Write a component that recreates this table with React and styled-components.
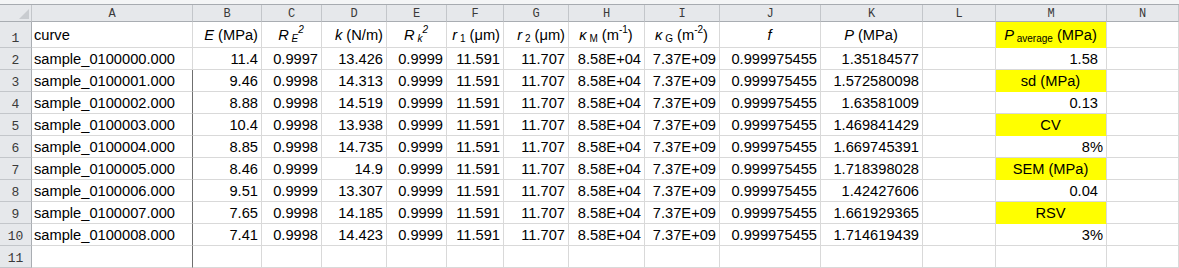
import React from "react";
import styled, { createGlobalStyle, css } from "styled-components";

const Global = createGlobalStyle`
  html, body { margin: 0; padding: 0; background: #ffffff; }
  body { font-family: "Liberation Sans", Arial, sans-serif; }
  * { box-sizing: border-box; }
`;

const COLS = [32, 161, 69, 60, 65, 60, 57, 65, 76, 75, 101, 102, 73, 111, 72];
const LETTERS = ["A", "B", "C", "D", "E", "F", "G", "H", "I", "J", "K", "L", "M", "N"];

const Sheet = styled.div`
  width: 1179px;
  height: 268px;
  overflow: hidden;
  background: #ffffff;
  display: flex;
  flex-direction: column;
`;

const TopStrip = styled.div`
  height: 5px;
  flex: none;
  background: #f4f5f6;
  border-bottom: 1px solid #a7abb0;
`;

const Grid = styled.div`
  display: grid;
  grid-template-columns: ${COLS.map((w) => `${w}px`).join(" ")};
  grid-template-rows: 17px 26px repeat(10, 22px);
`;

const HeadCell = styled.div`
  background: #e6e8eb;
  border-right: 1px solid #c3c6ca;
  border-bottom: 1px solid #a9adb2;
  display: flex;
  align-items: center;
  justify-content: center;
  font-family: "Liberation Mono", "DejaVu Sans Mono", monospace;
  font-size: 12px;
  color: #3a3a3a;
  padding-top: 1px;
`;

const Corner = styled(HeadCell)`
  align-items: flex-end;
  justify-content: flex-end;
  padding: 0 2px 2px 0;
`;

const RowHead = styled.div`
  background: #e6e8eb;
  border-right: 1px solid #a9adb2;
  border-bottom: 1px solid #c3c6ca;
  display: flex;
  align-items: flex-end;
  justify-content: center;
  padding-bottom: 1px;
  font-family: "Liberation Mono", "DejaVu Sans Mono", monospace;
  font-size: 13px;
  color: #3a3a3a;
`;

const Cell = styled.div`
  border-right: 1px solid ${(p) => (p.$split ? "#6f6f6f" : "#d9d9d9")};
  border-bottom: 1px solid #d9d9d9;
  display: flex;
  align-items: flex-end;
  padding: 0 ${(p) => p.$pr ?? 3}px 1px 2px;
  font-size: 14.67px;
  line-height: 18px;
  color: #000000;
  white-space: nowrap;
  justify-content: ${(p) =>
    p.$align === "right" ? "flex-end" : p.$align === "center" ? "center" : "flex-start"};
  ${(p) =>
    p.$fill &&
    css`
      background: #ffff00;
      border-bottom-color: #ffff00;
    `}
  ${(p) =>
    p.$title &&
    css`
      padding-bottom: 3px;
    `}
`;

const Content = styled.span`
  display: block;
  white-space: pre;
`;

const I = styled.i`
  font-style: italic;
`;

const Sub = styled.sub`
  font-size: 10px;
  vertical-align: -2px;
  line-height: 0;
  font-style: ${(p) => (p.$it ? "italic" : "normal")};
`;

const Sup = styled.sup`
  font-size: 10px;
  vertical-align: 7px;
  line-height: 0;
  font-style: ${(p) => (p.$it ? "italic" : "normal")};
`;

const header = [
  { a: "left", c: "curve" },
  { a: "right", c: <><I>E</I> (MPa)</> },
  { a: "center", c: <><I>R</I><Sub $it> E</Sub><Sup $it>2</Sup></> },
  { a: "right", c: <><I>k</I> (N/m)</> },
  { a: "center", c: <><I>R</I><Sub $it> k</Sub><Sup $it>2</Sup></> },
  { a: "right", c: <><I>r</I><Sub> 1</Sub> (μm)</> },
  { a: "right", c: <><I>r</I><Sub> 2</Sub> (μm)</> },
  { a: "center", c: <><I>κ</I><Sub> M</Sub> (m<Sup>-1</Sup>)</> },
  { a: "center", c: <><I>κ</I><Sub> G</Sub> (m<Sup>-2</Sup>)</> },
  { a: "center", c: <I>f</I> },
  { a: "center", c: <><I>P</I> (MPa)</> },
  { a: "left", c: "" },
  { a: "center", c: <><I>P</I><Sub> average</Sub> (MPa)</>, fill: true },
  { a: "left", c: "" },
];

const B = ["11.4", "9.46", "8.88", "10.4", "8.85", "8.46", "9.51", "7.65", "7.41"];
const C = ["0.9997", "0.9998", "0.9998", "0.9998", "0.9998", "0.9999", "0.9999", "0.9998", "0.9998"];
const D = ["13.426", "14.313", "14.519", "13.938", "14.735", "14.9", "13.307", "14.185", "14.423"];
const K = [
  "1.35184577",
  "1.572580098",
  "1.63581009",
  "1.469841429",
  "1.669745391",
  "1.718398028",
  "1.42427606",
  "1.661929365",
  "1.714619439",
];
const M = [
  { t: "1.58", pr: 8 },
  { t: "sd (MPa)", fill: true },
  { t: "0.13", pr: 8 },
  { t: "CV", fill: true },
  { t: "8%", pr: 3 },
  { t: "SEM (MPa)", fill: true },
  { t: "0.04", pr: 8 },
  { t: "RSV", fill: true },
  { t: "3%", pr: 3 },
];

function dataRow(i) {
  const m = M[i];
  return [
    { a: "left", c: `sample_010000${i}.000` },
    { a: "right", c: B[i] },
    { a: "right", c: C[i] },
    { a: "right", c: D[i] },
    { a: "right", c: "0.9999" },
    { a: "right", c: "11.591" },
    { a: "right", c: "11.707" },
    { a: "right", c: "8.58E+04" },
    { a: "right", c: "7.37E+09" },
    { a: "right", c: "0.999975455" },
    { a: "right", c: K[i] },
    { a: "left", c: "" },
    m.fill ? { a: "center", c: m.t, fill: true } : { a: "right", c: m.t, pr: m.pr },
    { a: "left", c: "" },
  ];
}

const rows = [header, ...Array.from({ length: 9 }, (_, i) => dataRow(i)), Array.from({ length: 14 }, () => ({ a: "left", c: "" }))];

export default function App() {
  return (
    <>
      <Global />
      <Sheet>
        <TopStrip />
        <Grid>
          <Corner>
            <svg width="10" height="10" viewBox="0 0 10 10">
              <polygon points="10,0 10,10 0,10" fill="#c9ccd0" />
            </svg>
          </Corner>
          {LETTERS.map((l) => (
            <HeadCell key={l}>{l}</HeadCell>
          ))}
          {rows.map((row, ri) => (
            <React.Fragment key={ri}>
              <RowHead>{ri + 1}</RowHead>
              {row.map((cell, ci) => (
                <Cell
                  key={ci}
                  $align={cell.a}
                  $fill={cell.fill}
                  $pr={cell.pr}
                  $title={ri === 0}
                  $split={ci === 0 && ri >= 2}
                >
                  <Content>{cell.c}</Content>
                </Cell>
              ))}
            </React.Fragment>
          ))}
        </Grid>
      </Sheet>
    </>
  );
}
